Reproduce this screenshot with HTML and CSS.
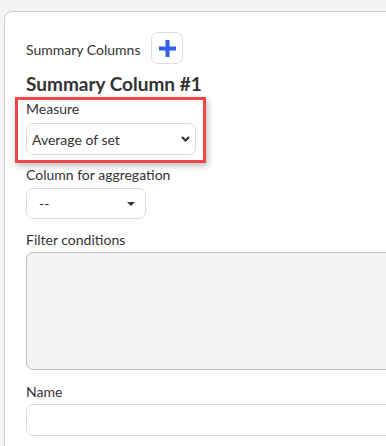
FILE: index.html
```html
<!DOCTYPE html>
<html lang="en">
<head>
    <meta charset="UTF-8">
    <title>Summary Columns</title>
    <link rel="stylesheet" href="styles.css">
</head>
<body>

    <div class="card">
        <!-- Header with add button -->
        <div class="section-head">
            <span class="section-title">Summary Columns</span>
            <button type="button" class="add-btn" aria-label="Add column">
                <svg width="17" height="17" viewBox="0 0 17 17">
                    <rect x="6.5" y="0" width="4" height="17" fill="#2f5ee6"/>
                    <rect x="0" y="6.5" width="17" height="4" fill="#2f5ee6"/>
                </svg>
            </button>
        </div>

        <h2 class="column-title">Summary Column #1</h2>

        <!-- Highlighted field -->
        <div class="highlight">
            <label class="field-label">Measure</label>
            <div class="select select-wide">
                <span>Average of set</span>
                <svg class="chevron" width="9" height="6" viewBox="0 0 9 6">
                    <path d="M1 1 L4.5 4.5 L8 1" fill="none" stroke="#333" stroke-width="2.2"/>
                </svg>
            </div>
        </div>

        <label class="field-label label-agg">Column for aggregation</label>
        <div class="select select-small">
            <span>--</span>
            <svg class="caret" width="8" height="4" viewBox="0 0 8 4">
                <path d="M0 0 L8 0 L4 4 Z" fill="#333"/>
            </svg>
        </div>

        <label class="field-label label-filter">Filter conditions</label>
        <div class="filter-box"></div>

        <label class="field-label label-name">Name</label>
        <div class="text-input"></div>
    </div>

</body>
</html>
```

FILE: styles.css
```css
body {
    font-family: Lato, "Open Sans", sans-serif;
    background-color: #f4f4f4;
    color: #333;
    margin: 0;
    padding: 0;
    overflow: hidden;
}

.card {
    width: 520px;
    height: 480px;
    margin: 11px 0 0 4px;
    padding: 20px 0 0 21px;
    background-color: #fff;
    border: 1px solid #c9c9d2;
    border-radius: 8px;
    box-sizing: border-box;
}

.section-head {
    display: flex;
    align-items: center;
    gap: 11px;
}

.section-title {
    font-size: 14px;
    padding-top: 2px;
}

.add-btn {
    width: 32px;
    height: 32px;
    padding: 0;
    display: flex;
    align-items: center;
    justify-content: center;
    background-color: #fff;
    border: 1px solid #dcdcdc;
    border-radius: 7px;
}

.column-title {
    font-size: 19px;
    font-weight: bold;
    line-height: 22px;
    margin: 9px 0 0 0;
}

.field-label {
    display: block;
    font-size: 14px;
    line-height: 18px;
}

.highlight {
    width: 191px;
    margin: 2px 0 0 -11px;
    padding: 0 0 5px 8px;
    border: 3px solid #ef4646;
    box-sizing: border-box;
    box-shadow: 2px 3px 6px rgba(0, 0, 0, 0.25);
}

.select {
    display: flex;
    align-items: center;
    justify-content: space-between;
    border: 1px solid #dcdcdc;
    border-radius: 7px;
    box-sizing: border-box;
    font-size: 14px;
}

.select-wide {
    width: 170px;
    height: 32px;
    margin-top: 5px;
    padding: 0 5px 0 5px;
}

.select-small {
    width: 120px;
    height: 31px;
    margin-top: 4px;
    padding: 0 10px 0 12px;
}

.label-agg {
    margin-top: 3px;
}

.label-filter {
    margin-top: 12px;
}

.filter-box {
    width: 480px;
    height: 118px;
    margin-top: 3px;
    background-color: #f4f4f4;
    border: 1px solid #bdbdc6;
    border-radius: 7px;
    box-sizing: border-box;
}

.label-name {
    margin-top: 13px;
}

.text-input {
    width: 480px;
    height: 32px;
    margin-top: 3px;
    border: 1px solid #dcdcdc;
    border-radius: 7px;
    box-sizing: border-box;
}
```
